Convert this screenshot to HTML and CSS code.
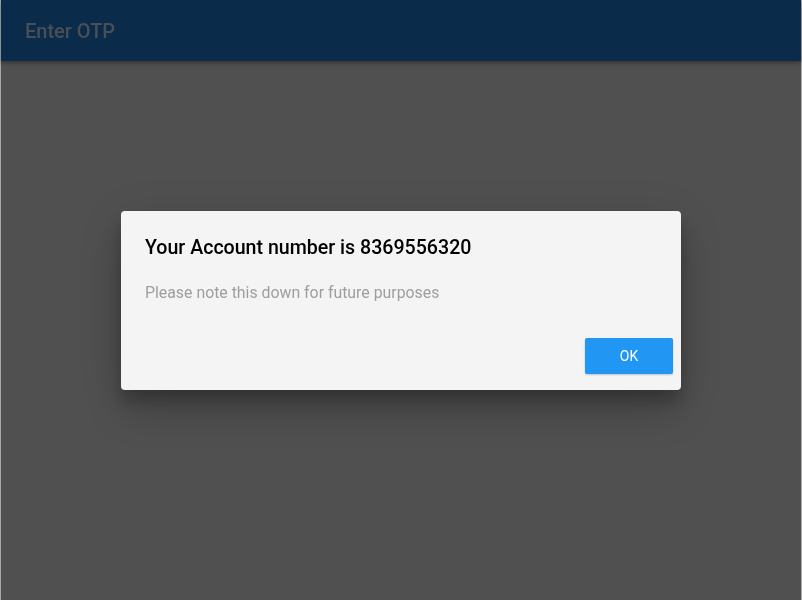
FILE: index.html
```html
<!DOCTYPE html>
<html>
<head>
<meta charset="utf-8">
<link rel="stylesheet" href="styles.css">
</head>
<body>
<div class="app">
  <header class="appbar"><h1 class="appbar-title">Enter OTP</h1></header>
  <main class="content"></main>
</div>
<div class="overlay">
  <div class="dialog">
    <h2 class="dialog-title">Your Account number is 8369556320</h2>
    <p class="dialog-text">Please note this down for future purposes</p>
    <div class="dialog-actions">
      <button class="btn-ok">OK</button>
    </div>
  </div>
</div>
</body>
</html>
```
FILE: styles.css
```css
html, body {
  margin: 0;
  padding: 0;
  height: 100%;
  font-family: Roboto, "Liberation Sans", sans-serif;
}
body {
  background: #4f4f4f;
}
.app {
  height: 600px;
  display: flex;
  flex-direction: column;
  border-left: 1px solid #a9a9a9;
  border-right: 1px solid #a9a9a9;
  box-sizing: border-box;
}
.appbar {
  height: 61px;
  background: #0a2b4a;
  display: flex;
  align-items: center;
  padding-left: 24px;
  box-shadow: 0 2px 4px rgba(0, 0, 0, 0.35);
  position: relative;
  z-index: 1;
}
.appbar-title {
  margin: 0;
  font-size: 20px;
  font-weight: 500;
  color: #4a4f55;
}
.content {
  flex: 1;
  background: #505050;
}
.overlay {
  position: fixed;
  inset: 0;
  display: flex;
  align-items: center;
  justify-content: center;
}
.dialog {
  width: 560px;
  height: 179px;
  box-sizing: border-box;
  background: #f4f4f4;
  border-radius: 4px;
  box-shadow: 0 11px 15px rgba(0, 0, 0, 0.2), 0 24px 38px rgba(0, 0, 0, 0.14), 0 9px 46px rgba(0, 0, 0, 0.12);
  padding: 25px 8px 16px 24px;
  display: flex;
  flex-direction: column;
}
.dialog-title {
  margin: 0;
  font-size: 19.6px;
  line-height: 24px;
  font-weight: 500;
  color: #000;
}
.dialog-text {
  margin: 21px 0 0;
  font-size: 15.85px;
  line-height: 24px;
  color: #9e9e9e;
}
.dialog-actions {
  margin-top: auto;
  display: flex;
  justify-content: flex-end;
}
.btn-ok {
  width: 88px;
  height: 36px;
  border: none;
  border-radius: 2px;
  background: #2196f3;
  color: #fff;
  font-family: Roboto, "Liberation Sans", sans-serif;
  font-size: 14px;
  font-weight: 400;
  box-shadow: 0 1px 2px rgba(0, 0, 0, 0.2);
}
```
